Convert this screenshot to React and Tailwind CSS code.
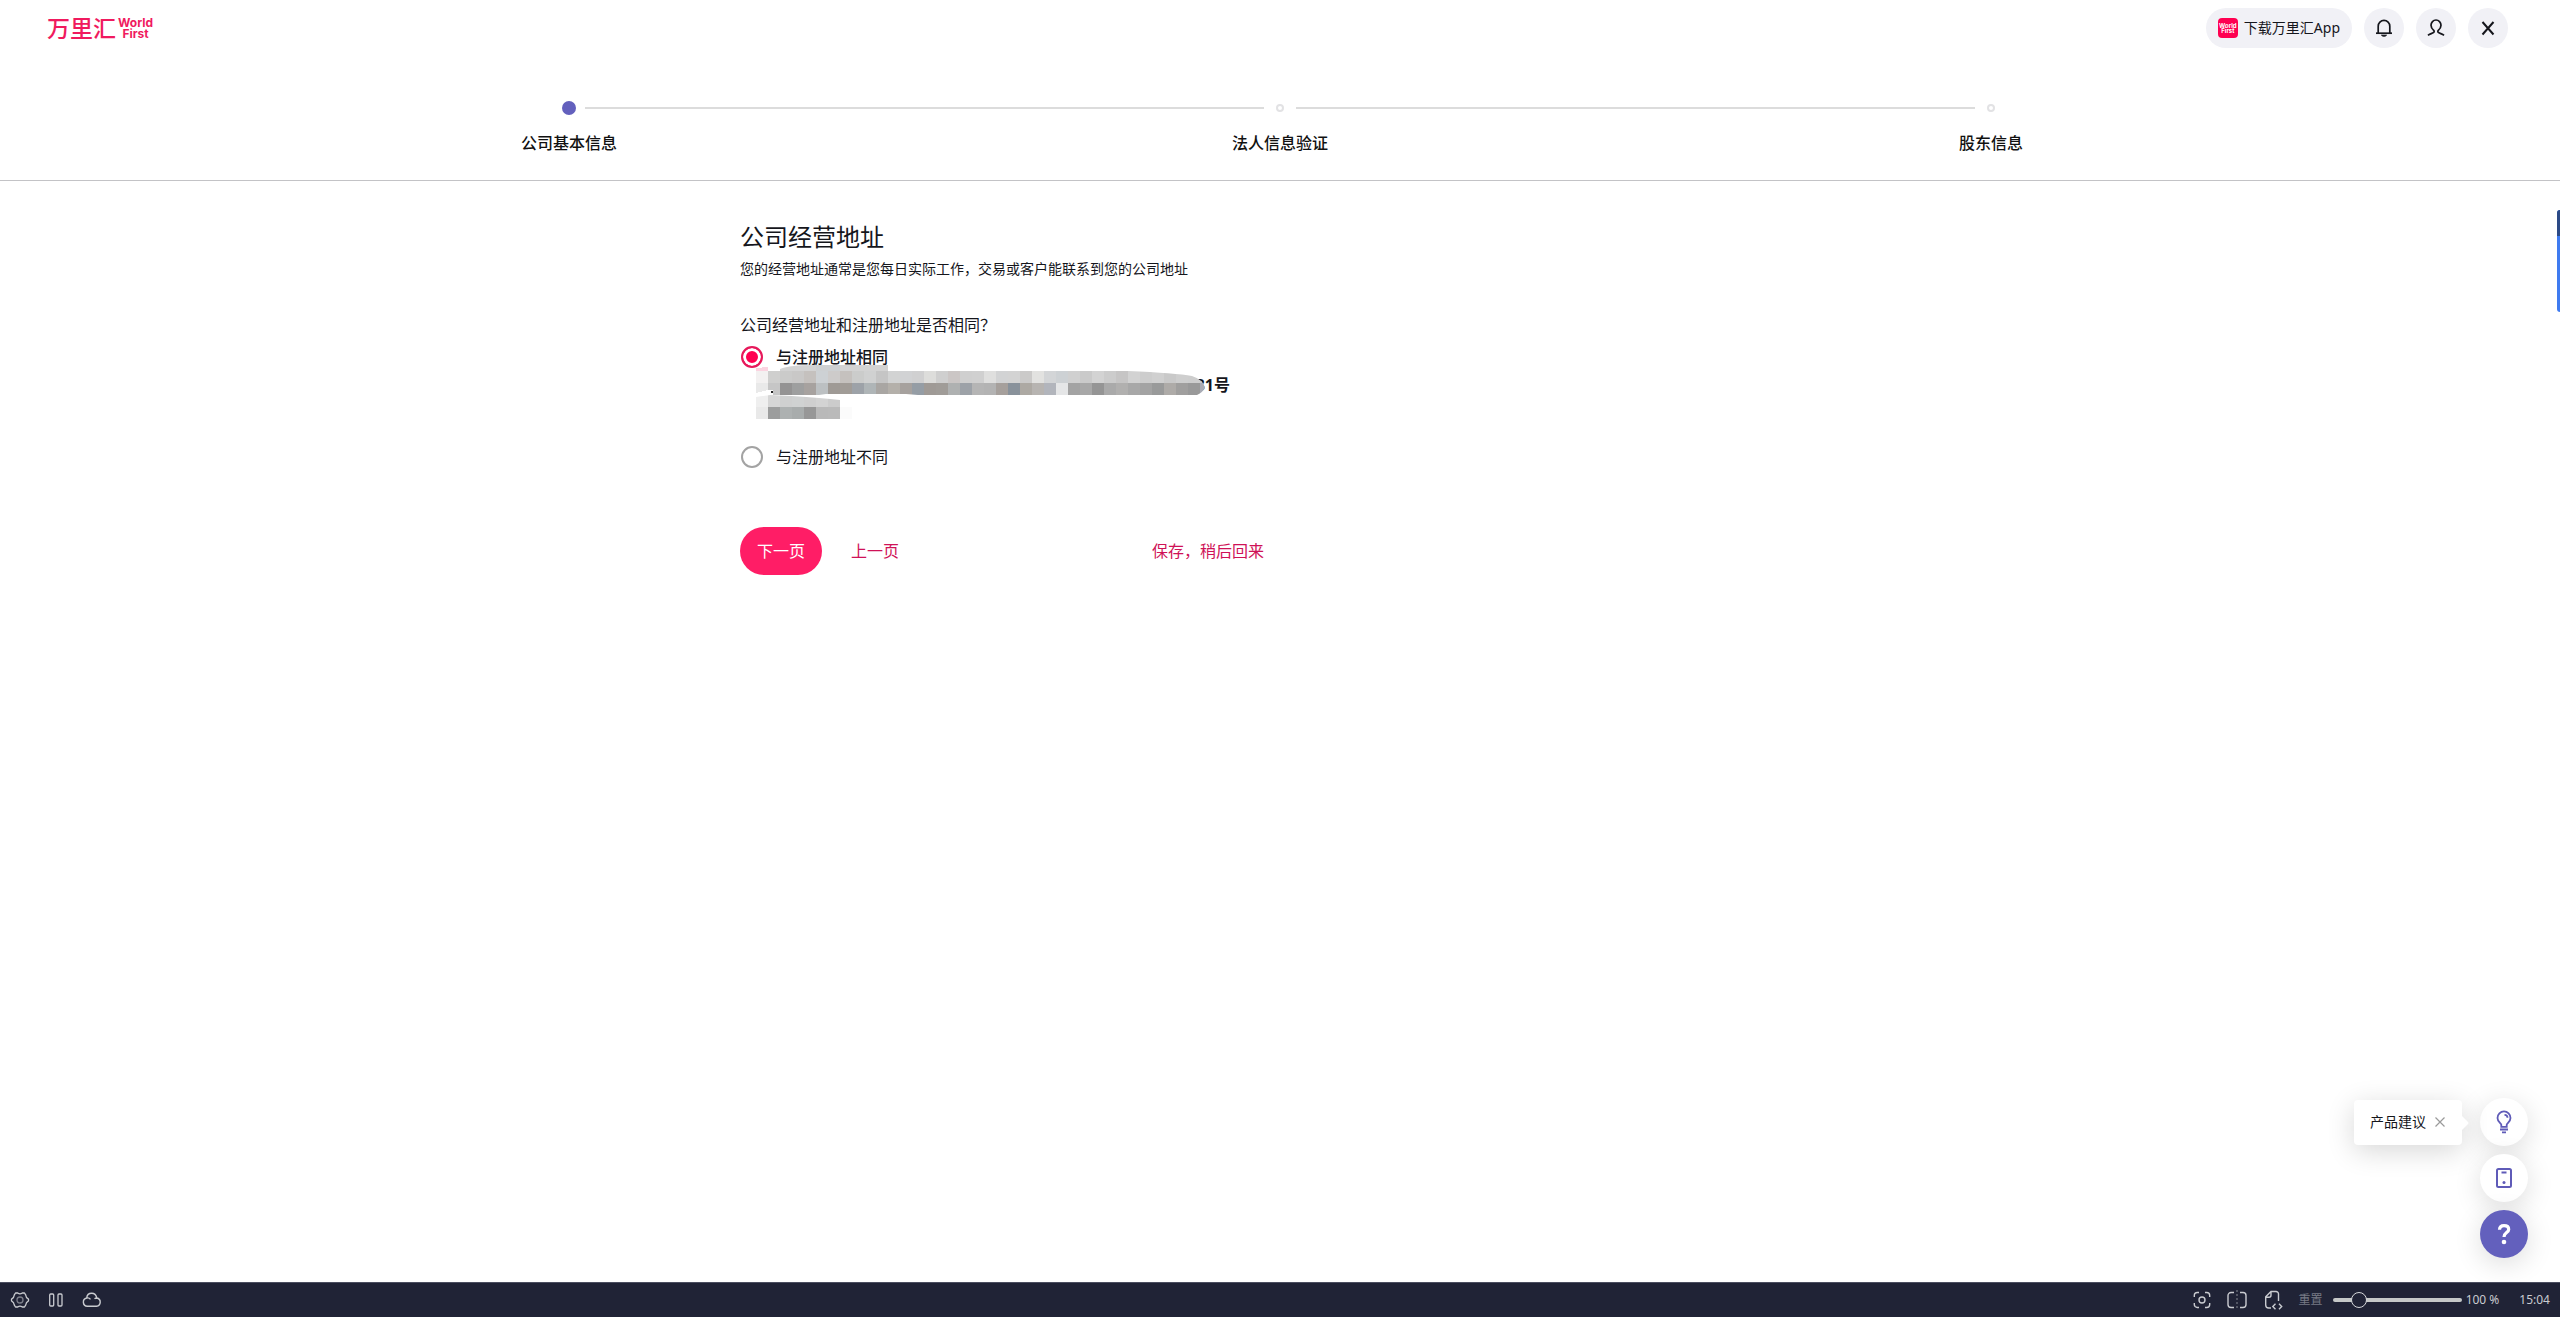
import React from "react";

const steps = [
  { label: "公司基本信息", active: true },
  { label: "法人信息验证" },
  { label: "股东信息" },
];

const maskUpper = [
  "#f3f1f1", "#cfcfce", "#cbcbca", "#c9c8c7", "#c5c1be", "#cdd1d4", "#cdcbca", "#c5c1be", "#cbcccb", "#d0d1d1",
  "#c5c5c5", "#d2d3d3", "#d1d2d4", "#d0d0d1", "#dddddb", "#cfcfcf", "#cbc6c5", "#cfcfcf", "#d0d0d0", "#dfdfde",
  "#d2d3d4", "#d3d3d3", "#cbcac9", "#e2e2e0", "#d3d5d7", "#cdd1d4", "#d0d0d0", "#cacaca", "#d3d3d3", "#cccccc",
  "#c6c5c5", "#d2d2d2", "#cdcdcd", "#d0d0d0", "#c9c9c9", "#cecece", "#cdcdcd", "#c9c9c9",
];
const maskLower = [
  "#e9e9e9", "#c6c6c6", "#949393", "#9e9f9f", "#a7a29f", "#bcc0c2", "#9f9a95", "#a19c97", "#9da2a8", "#afb5b7",
  "#a9a6a3", "#b4b0aa", "#a6a19e", "#959da5", "#9f9a96", "#a09c98", "#afb1b1", "#9da2a8", "#b5b5b5",
  "#b3b3b3", "#a6a09c", "#89929b", "#ada9a3", "#b7b4b1", "#b2b5bc", "#e5e6e7", "#a3a3a3", "#a8a8a8", "#959595",
  "#aaaaaa", "#b1b0af", "#a8a8a8", "#a3a3a3", "#999a9a", "#aeaba8", "#a09f9e", "#999999", "#a9abb5",
];
const maskTail = ["#efefef", "#d6d6d6", "#cfd0d0", "#d0d2d2", "#cfcfcf", "#d3d3d3", "#cccccc"];
const maskTailLower = ["#e9e9e9", "#9c9d9d", "#adb1b1", "#a8acac", "#979797", "#b9b9b9", "#bababa"];

function MaskRow({ colors, y }) {
  return colors.map((c, i) => <rect key={i} x={i * 12} y={y} width="12" height="12" fill={c} />);
}

function AddressMask() {
  return (
    <svg
      className="pointer-events-none absolute -top-2.5 left-4"
      width="456"
      height="60"
      viewBox="0 0 456 60"
      shapeRendering="crispEdges"
      aria-hidden="true"
    >
      <defs>
        <clipPath id="brush">
          <path d="M0 12H24V10Q34 6 58 6H132V12H372Q420 14 436 17Q448 21 449 29Q446 34 441 36H162L150 35H70L56 37H0V37H12V33L0 34Z" />
        </clipPath>
        <clipPath id="brush-tail">
          <path d="M0 38L14 36L36 37Q66 39 84 41V60H0Z" />
        </clipPath>
      </defs>
      <g clipPath="url(#brush)">
        <rect x="24" y="0" width="108" height="12" fill="#d3d3d3" />
        <rect x="60" y="0" width="24" height="12" fill="#cdd0d2" />
        <MaskRow colors={maskUpper} y={12} />
        <MaskRow colors={maskLower} y={24} />
      </g>
      <path d="M0 9L12 8V12H0Z" fill="#fbd3e0" />
      <path d="M0 34L12 31L17 31V36L0 38Z" fill="#fff" />
      <rect x="15" y="32" width="2" height="2" fill="#222" />
      <g clipPath="url(#brush-tail)">
        <MaskRow colors={maskTail} y={36} />
        <MaskRow colors={maskTailLower} y={48} />
      </g>
      <rect x="84" y="48" width="12" height="12" fill="#fbfbfb" />
    </svg>
  );
}

function IconButton({ label, children }) {
  return (
    <button aria-label={label} className="flex size-10 items-center justify-center rounded-full bg-[#f1f1f6] text-[#15161c]">
      {children}
    </button>
  );
}

function Header() {
  return (
    <header className="flex items-center justify-between pt-2 pr-13 pl-[47px]">
      <a href="#" aria-label="万里汇 WorldFirst" className="flex items-center gap-0.5 text-[#f01a5e]">
        <span className="text-[23px] leading-6 font-medium">万里汇</span>
        <span className="flex flex-col items-center font-['Inter'] text-[12px] leading-[11px] font-bold">
          <span>World</span>
          <span>First</span>
        </span>
      </a>
      <div className="flex items-center gap-3">
        <button className="flex h-10 items-center gap-1.5 rounded-full bg-[#f1f1f6] px-3 text-sm text-[#15161c]">
          <span className="flex size-5 flex-col items-center justify-center rounded bg-[#ff0051] font-['Inter'] text-[6px] leading-[5px] font-bold text-white">
            <span>World</span>
            <span>First</span>
          </span>
          <span>下载万里汇App</span>
        </button>
        <IconButton label="通知">
          <svg width="20" height="20" viewBox="0 0 20 20" fill="none" stroke="currentColor" strokeWidth="1.7">
            <path d="M4.2 15V8.2a5.8 5.8 0 0 1 11.6 0V15" />
            <path d="M2 15.2h16" />
            <path d="M7.5 17.2h5c-.5 1.3-4.5 1.3-5 0Z" fill="currentColor" strokeWidth="1" />
          </svg>
        </IconButton>
        <IconButton label="账户">
          <svg width="20" height="20" viewBox="0 0 20 20" fill="none" stroke="currentColor" strokeWidth="1.7">
            <path d="M2 17.3c1.4-1.3 3.8-1.7 5.5-2.7.9-.6.8-1.6.2-2.2C6 10.9 5 9 5 7.3a5 5.3 0 0 1 10 0c0 1.700-1 3.600-2.700 5.100-.6.600-.7 1.600.2 2.200 1.700 1 4.100 1.400 5.500 2.700" />
          </svg>
        </IconButton>
        <IconButton label="关闭">
          <svg width="20" height="20" viewBox="0 0 20 20" fill="none" stroke="currentColor" strokeWidth="2">
            <path d="M4.500 4 15.500 16.500M15.500 4 4.500 16.500" />
          </svg>
        </IconButton>
      </div>
    </header>
  );
}

function Stepper() {
  return (
    <nav aria-label="进度" className="border-b border-[#c3c3c6] pt-[53px] pb-[25px]">
      <ol className="mx-auto grid w-5/6 grid-cols-3">
        {steps.map((s, i) => (
          <li key={s.label} className="flex flex-col items-center gap-4">
            <div className="flex h-3.5 w-full items-center">
              <span className={i > 0 ? "h-0.5 flex-1 bg-[#dcdcdc]" : "h-0.5 flex-1"} />
              <span className="flex w-8 justify-center">
                <span
                  className={
                    s.active ? "size-3.5 rounded-full bg-[#6360bd]" : "size-2 rounded-full border-2 border-[#e2e2e4]"
                  }
                />
              </span>
              <span className={i < steps.length - 1 ? "h-0.5 flex-1 bg-[#dcdcdc]" : "h-0.5 flex-1"} />
            </div>
            <span className="text-base leading-6 font-medium text-[#111]">{s.label}</span>
          </li>
        ))}
      </ol>
    </nav>
  );
}

const radioClass =
  "size-[22px] appearance-none rounded-full border-2 border-[#a3a3a3] checked:border-[#e6195b] checked:bg-[#ff0051] checked:shadow-[inset_0_0_0_3px_white]";

function AddressForm() {
  return (
    <form className="mx-auto w-full max-w-[1080px] pt-10 text-[#15161c]" onSubmit={(e) => e.preventDefault()}>
      <h1 className="text-2xl leading-8">公司经营地址</h1>
      <p className="mt-1 text-sm leading-6">您的经营地址通常是您每日实际工作，交易或客户能联系到您的公司地址</p>
      <fieldset className="mt-8">
        <legend className="text-base leading-6">公司经营地址和注册地址是否相同？</legend>
        <div className="mt-2 flex items-center gap-[13px] pl-px">
          <input id="same" name="address" type="radio" defaultChecked className={radioClass} />
          <label htmlFor="same" className="text-base leading-6 font-medium">与注册地址相同</label>
        </div>
        <div className="relative h-12 w-[490px] pt-1 text-right text-base leading-6 font-bold">
          31号
          <AddressMask />
        </div>
        <div className="mt-7 flex items-center gap-[13px] pl-px">
          <input id="different" name="address" type="radio" className={radioClass} />
          <label htmlFor="different" className="text-base leading-6">与注册地址不同</label>
        </div>
      </fieldset>
      <div className="mt-[58px] flex w-[524px] items-center justify-between text-base leading-6 text-[#cf1257]">
        <div className="flex items-center gap-[29px]">
          <button type="submit" className="h-12 rounded-full bg-[#ff1d66] px-[17px] text-white">下一页</button>
          <button type="button">上一页</button>
        </div>
        <button type="button">保存，稍后回来</button>
      </div>
    </form>
  );
}

function FloatingTools() {
  const circle = "flex size-12 items-center justify-center rounded-full shadow-[0_6px_28px_rgba(0,0,0,0.14)]";
  return (
    <aside className="absolute right-8 bottom-6 flex flex-col items-end gap-2">
      <div className="flex items-center gap-[18px]">
        <div className="relative flex h-[45px] items-center gap-2 rounded bg-white px-4 shadow-[0_6px_28px_rgba(0,0,0,0.16)]">
          <span className="text-sm text-[#15161c]">产品建议</span>
          <button aria-label="关闭提示" className="text-[#9a9a9a]">
            <svg width="12" height="12" viewBox="0 0 12 12" fill="none" stroke="currentColor" strokeWidth="1.200">
              <path d="M1.500 1.500l9 9M10.500 1.500l-9 9" />
            </svg>
          </button>
          <svg className="absolute top-[15px] -right-[7px]" width="8" height="16" viewBox="0 0 8 16" fill="#fff" aria-hidden="true">
            <path d="M0 0 7 7q1 1 0 2L0 16Z" />
          </svg>
        </div>
        <button aria-label="产品建议" className={circle + " bg-white text-[#5f5bb8]"}>
          <svg width="24" height="24" viewBox="0 0 24 24" fill="none" stroke="currentColor" strokeWidth="1.800">
            <path d="M9.300 16.800v-2C9.300 13.400 5.500 12.200 5.500 7.900a6.500 6.500 0 0 1 13 0c0 4.300-3.800 5.500-3.800 6.900v2Z" />
            <path d="M12.500 4.800c1.800.1 3 1.300 3 3M8 19.500h8M10 22.300h4" />
          </svg>
        </button>
      </div>
      <button aria-label="手机版" className={circle + " bg-white text-[#5f5bb8]"}>
        <svg width="24" height="24" viewBox="0 0 24 24" fill="none" stroke="currentColor" strokeWidth="2">
          <rect x="5" y="3" width="14" height="18" rx="1.500" />
          <path d="M9.500 6.500h5" />
          <circle cx="12" cy="16.500" r="1.500" fill="currentColor" stroke="none" />
        </svg>
      </button>
      <button aria-label="帮助" className={circle + " bg-[#6360bd] text-white"}>
        <svg width="24" height="24" viewBox="0 0 24 24" fill="none" stroke="currentColor" strokeWidth="3.200">
          <path d="M7.500 7.800C7.600 5 9.400 3.700 12 3.700s4.700 1.300 4.700 3.700c0 3.300-4.700 3.200-4.700 7.600" />
          <circle cx="12" cy="20" r="2.300" fill="currentColor" stroke="none" />
        </svg>
      </button>
    </aside>
  );
}

function StatusBar() {
  return (
    <footer className="flex h-[35px] items-center justify-between border-t border-[#4b4e60] bg-[#202336] pr-2.5 pl-2.5 text-xs text-[#c9cbd0]">
      <div className="flex items-center gap-[18px]">
        <button aria-label="设置">
          <svg width="20" height="20" viewBox="0 0 20 20" fill="none" stroke="currentColor" strokeWidth="1.300" strokeLinejoin="round">
            <path d="M5.500 3h2.200q2.300 1.600 4.600 0h2.200l1.300 2.200q.1 2.700 2.700 4v1.600q-2.600 1.300-2.700 4L14.500 17h-2.200q-2.300-1.600-4.600 0H5.500l-1.300-2.200q-.1-2.700-2.700-4V9.200q2.600-1.300 2.700-4Z" />
            <circle cx="10" cy="10" r="3" strokeOpacity=".55" />
          </svg>
        </button>
        <button aria-label="暂停">
          <svg width="16" height="16" viewBox="0 0 16 16" fill="none" stroke="currentColor" strokeWidth="1.300">
            <rect x="1.700" y="2" width="4" height="12" rx="1" />
            <rect x="10" y="2" width="4" height="12" rx="1" />
          </svg>
        </button>
        <button aria-label="云同步">
          <svg width="20" height="20" viewBox="0 0 20 20" fill="none" stroke="currentColor" strokeWidth="1.400">
            <path d="M5.300 16.300A4.200 4.200 0 0 1 4.700 8C5 5 7 3.300 9.700 3.300S14.200 5.200 14.800 8a4.200 4.200 0 0 1-.3 8.300ZM4.700 8c1.500-.4 3 .2 3.800 1.300M14.800 8c-1 0-1.600.2-2.300.8" />
          </svg>
        </button>
      </div>
      <div className="flex items-center">
        <div className="flex items-center gap-4">
          <button aria-label="截图">
            <svg width="18" height="20" viewBox="0 0 18 20" fill="none" stroke="currentColor" strokeWidth="1.400">
              <path d="M1.300 7V5.500a3 3 0 0 1 3-3H6M12 2.500h1.700a3 3 0 0 1 3 3V7M16.700 13v1.500a3 3 0 0 1-3 3H12M6 17.500H4.300a3 3 0 0 1-3-3V13" />
              <circle cx="9" cy="10" r="3" />
            </svg>
          </button>
          <button aria-label="分屏">
            <svg width="20" height="20" viewBox="0 0 20 20" fill="none" stroke="currentColor" strokeWidth="1.400">
              <path d="M7 2.500H4a3 3 0 0 0-3 3v9a3 3 0 0 0 3 3h3M13 2.500h3a3 3 0 0 1 3 3v9a3 3 0 0 1-3 3h-3" />
              <path d="M10 0v20" strokeWidth="1" strokeDasharray="2 2" strokeOpacity=".6" />
            </svg>
          </button>
          <button aria-label="开发工具">
            <svg width="20" height="20" viewBox="0 0 20 20" fill="none" stroke="currentColor" strokeWidth="1.400">
              <path d="M15.500 11V4a2.500 2.500 0 0 0-2.500-2.500H8L2.700 6.800V15a3 3 0 0 0 3 3H8M2.700 7.300H6a2 2 0 0 0 2-2V1.500" />
              <path d="M12.500 13.800 9.800 16.500l2.700 2.700M16 13.800l2.700 2.700-2.700 2.700" />
            </svg>
          </button>
          <button className="text-[#777a85]">重置</button>
        </div>
        <input
          type="range"
          aria-label="缩放"
          min="0"
          max="100"
          defaultValue="16"
          className="ml-2.5 h-4 w-[129px] appearance-none bg-transparent [&::-webkit-slider-runnable-track]:h-1 [&::-webkit-slider-runnable-track]:rounded-full [&::-webkit-slider-runnable-track]:bg-[#c5c8c8] [&::-webkit-slider-thumb]:-mt-1.5 [&::-webkit-slider-thumb]:size-4 [&::-webkit-slider-thumb]:appearance-none [&::-webkit-slider-thumb]:rounded-full [&::-webkit-slider-thumb]:border [&::-webkit-slider-thumb]:border-[#d5d7da] [&::-webkit-slider-thumb]:bg-[#202336]"
        />
        <span className="ml-1">100 %</span>
        <time className="ml-5">15:04</time>
      </div>
    </footer>
  );
}

export default function App() {
  return (
    <div className="flex min-h-screen flex-col bg-white font-['Noto_Sans','Noto_Sans_CJK_SC',sans-serif]">
      <Header />
      <Stepper />
      <main className="relative flex flex-1 flex-col">
        <AddressForm />
        <div className="absolute top-[29px] right-0 flex h-[102px] w-[3px] flex-col overflow-hidden rounded-l bg-[#3f7bf0]">
          <span className="h-[26px] bg-[#2c4a86]" />
        </div>
        <FloatingTools />
      </main>
      <StatusBar />
    </div>
  );
}
